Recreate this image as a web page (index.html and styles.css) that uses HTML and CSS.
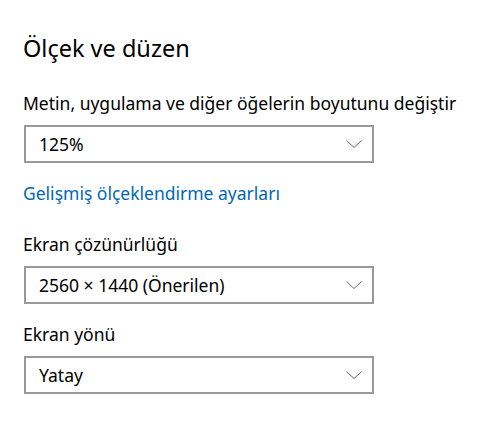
FILE: index.html
```html
<!DOCTYPE html>
<html lang="tr">
<head>
    <meta charset="UTF-8">
    <meta name="viewport" content="width=device-width, initial-scale=1.0">
    <title>Ölçek ve düzen</title>
    <link rel="stylesheet" href="styles.css">
</head>
<body>
    <div class="settings">
        <h2 class="section-title">Ölçek ve düzen</h2>

        <label class="field-label">Metin, uygulama ve diğer öğelerin boyutunu değiştir</label>
        <div class="dropdown">
            <span class="dropdown-value">125%</span>
            <svg class="chevron" width="16" height="8" viewBox="0 0 16 8"><path d="M0.5 0.5 L8 7.5 L15.5 0.5" fill="none" stroke="#666" stroke-width="1"/></svg>
        </div>

        <a href="#" class="link">Gelişmiş ölçeklendirme ayarları</a>

        <label class="field-label">Ekran çözünürlüğü</label>
        <div class="dropdown">
            <span class="dropdown-value">2560 × 1440 (Önerilen)</span>
            <svg class="chevron" width="16" height="8" viewBox="0 0 16 8"><path d="M0.5 0.5 L8 7.5 L15.5 0.5" fill="none" stroke="#666" stroke-width="1"/></svg>
        </div>

        <label class="field-label">Ekran yönü</label>
        <div class="dropdown">
            <span class="dropdown-value">Yatay</span>
            <svg class="chevron" width="16" height="8" viewBox="0 0 16 8"><path d="M0.5 0.5 L8 7.5 L15.5 0.5" fill="none" stroke="#666" stroke-width="1"/></svg>
        </div>
    </div>
</body>
</html>
```

FILE: styles.css
```css
body {
    font-family: 'Noto Sans', sans-serif;
    background-color: #ffffff;
    color: #000;
    margin: 0;
}
.settings {
    display: flex;
    flex-direction: column;
    align-items: flex-start;
    padding: 33px 0 0 23px;
}
.section-title {
    font-size: 23.5px;
    font-weight: 400;
    line-height: 30px;
    margin: 0 0 29px 0;
}
.field-label {
    font-size: 17.5px;
    line-height: 22px;
    margin-bottom: 11px;
}
.dropdown {
    box-sizing: border-box;
    width: 350px;
    height: 38px;
    margin-left: 1px;
    border: 2px solid #999999;
    display: flex;
    align-items: center;
    justify-content: space-between;
    padding: 0 10px 0 13px;
    font-size: 17.5px;
    margin-bottom: 19px;
}
.chevron {
    display: block;
}
.link {
    color: #0067b8;
    text-decoration: none;
    font-size: 17.5px;
    line-height: 22px;
    margin-bottom: 29px;
}
```
